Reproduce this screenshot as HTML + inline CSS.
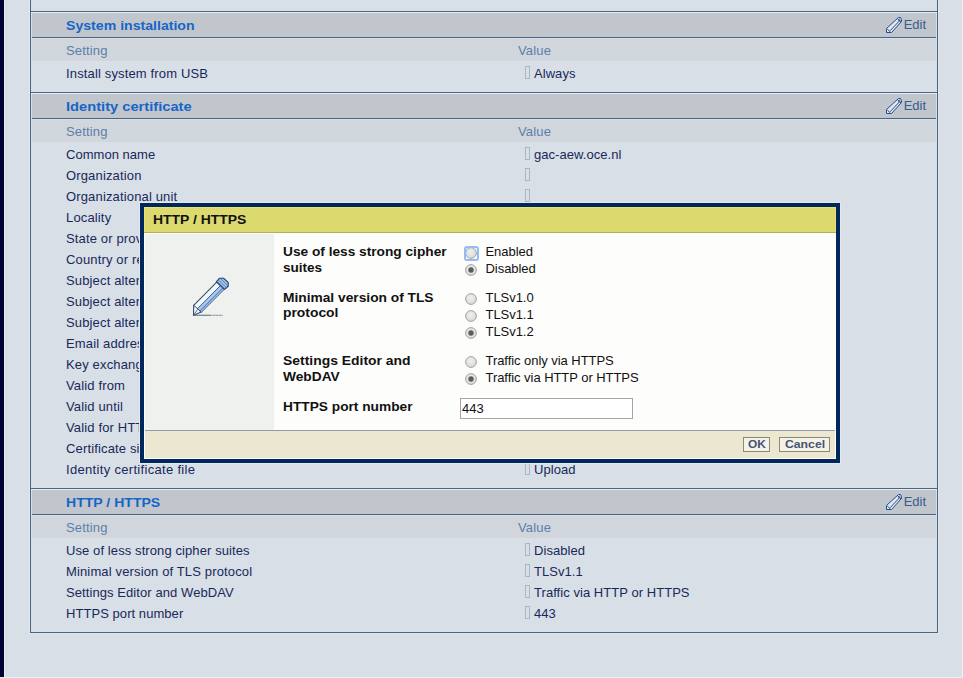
<!DOCTYPE html>
<html>
<head>
<meta charset="utf-8">
<style>
*{margin:0;padding:0;box-sizing:border-box}
html,body{width:963px;height:678px;overflow:hidden}
body{position:relative;background:#d9dfe6;font-family:"Liberation Sans",sans-serif;font-size:13px;color:#1b2a4c}
.a{position:absolute}
.t{position:absolute;white-space:nowrap;line-height:1}
.hl{position:absolute;left:30px;width:908px;height:1px;background:#4a6584}
.hlt{position:absolute;left:31px;width:906px;height:1px;background:#e9edf1}
.hdr{position:absolute;left:32px;width:904px;height:24px;background:#c1c5cc}
.hdrb{position:absolute;left:32px;width:904px;height:1px;background:#4a6584}
.set{position:absolute;left:32px;width:904px;height:22px;background:#d1d6dd}
.ttl{font-weight:bold;font-size:14px;color:#1f6bc4}
.sh{color:#6d8aaa}
.box{position:absolute;left:525px;width:5px;height:13px;border:1px solid #a9b6c6}
.edit{color:#3b5b8c}
</style>
</head>
<body>
<!-- left dark bar -->
<div class="a" style="left:0;top:0;width:4px;height:677px;background:#00032f"></div>
<div class="a" style="left:4px;top:0;width:1px;height:678px;background:#e6eaf1"></div>
<div class="a" style="left:0;top:677px;width:963px;height:1px;background:#eef0f3"></div>
<div class="a" style="left:962px;top:0;width:1px;height:678px;background:#eef0f3"></div>

<!-- panel borders -->
<div class="a" style="left:29px;top:0;width:1px;height:633px;background:#e4e8ee"></div>
<div class="a" style="left:30px;top:0;width:1px;height:633px;background:#4a6584"></div>
<div class="a" style="left:937px;top:0;width:1px;height:633px;background:#4a6584"></div>
<div class="a" style="left:938px;top:0;width:1px;height:634px;background:#e2e6ec"></div>
<div class="a" style="left:29px;top:633px;width:910px;height:1px;background:#e2e6ec"></div>
<div class="a" style="left:30px;top:632px;width:908px;height:1px;background:#4a6584"></div>

<!-- Section 1 -->
<div class="hl" style="top:11px"></div>
<div class="hlt" style="top:12px"></div>
<div class="hdr" style="top:13px"></div>
<div class="hdrb" style="top:37px"></div>
<div class="set" style="top:39px"></div>

<!-- Section 2 -->
<div class="hl" style="top:92px"></div>
<div class="hlt" style="top:93px"></div>
<div class="hdr" style="top:94px"></div>
<div class="hdrb" style="top:118px"></div>
<div class="set" style="top:120px"></div>

<!-- Section 3 -->
<div class="hl" style="top:488px"></div>
<div class="hlt" style="top:489px"></div>
<div class="hdr" style="top:490px"></div>
<div class="hdrb" style="top:514px"></div>
<div class="set" style="top:516px"></div>

<div class="t" style="left:66px;top:19.84px;font-size:12px;transform:scaleX(1.176);transform-origin:0 0;font-weight:bold;color:#1665c8">System installation</div>
<svg class="a" style="left:885px;top:16px" width="19" height="19" viewBox="0 0 19 19">
<path d="M1.5 16.5 L1.5 12.5 L13.5 1.5 L15.5 1.5 L16.5 3.5 L16.5 5.5 L6.5 16.5 Z" fill="#e3e6ec" stroke="#1f4e8e" stroke-width="1" stroke-linejoin="round"/>
<path d="M5 14.8 L14.8 4.5" stroke="#1f4e8e" stroke-width="1"/>
<path d="M2.3 13 L5.6 16.2" stroke="#1f4e8e" stroke-width="1"/>
<path d="M12.2 2.4 L16 6" stroke="#1f4e8e" stroke-width="1"/>
<circle cx="14.3" cy="3.9" r="0.9" fill="none" stroke="#1f4e8e" stroke-width="0.7"/>
</svg>
<div class="t" style="left:903.7px;top:18.00px;font-size:13px;color:#3b5b8c">Edit</div>
<div class="t" style="left:66px;top:44.00px;font-size:13px;color:#5b7fab;letter-spacing:0.15px">Setting</div>
<div class="t" style="left:518px;top:44.00px;font-size:13px;color:#5b7fab;letter-spacing:0.15px">Value</div>
<div class="t" style="left:66px;top:67.00px;font-size:13px;color:#17295a;letter-spacing:0.15px">Install system from USB</div>
<div class="box" style="top:66px"></div>
<div class="t" style="left:534px;top:67.00px;font-size:13px;color:#17295a;letter-spacing:0.05px">Always</div>
<div class="t" style="left:66px;top:100.84px;font-size:12px;transform:scaleX(1.223);transform-origin:0 0;font-weight:bold;color:#1665c8">Identity certificate</div>
<svg class="a" style="left:885px;top:97px" width="19" height="19" viewBox="0 0 19 19">
<path d="M1.5 16.5 L1.5 12.5 L13.5 1.5 L15.5 1.5 L16.5 3.5 L16.5 5.5 L6.5 16.5 Z" fill="#e3e6ec" stroke="#1f4e8e" stroke-width="1" stroke-linejoin="round"/>
<path d="M5 14.8 L14.8 4.5" stroke="#1f4e8e" stroke-width="1"/>
<path d="M2.3 13 L5.6 16.2" stroke="#1f4e8e" stroke-width="1"/>
<path d="M12.2 2.4 L16 6" stroke="#1f4e8e" stroke-width="1"/>
<circle cx="14.3" cy="3.9" r="0.9" fill="none" stroke="#1f4e8e" stroke-width="0.7"/>
</svg>
<div class="t" style="left:903.7px;top:99.00px;font-size:13px;color:#3b5b8c">Edit</div>
<div class="t" style="left:66px;top:125.00px;font-size:13px;color:#5b7fab;letter-spacing:0.15px">Setting</div>
<div class="t" style="left:518px;top:125.00px;font-size:13px;color:#5b7fab;letter-spacing:0.15px">Value</div>
<div class="t" style="left:66px;top:148.00px;font-size:13px;color:#17295a;letter-spacing:0.03px">Common name</div>
<div class="box" style="top:147px"></div>
<div class="t" style="left:534px;top:148.00px;font-size:13px;color:#17295a;letter-spacing:0.05px">gac-aew.oce.nl</div>
<div class="t" style="left:66px;top:169.00px;font-size:13px;color:#17295a;letter-spacing:0.15px">Organization</div>
<div class="box" style="top:168px"></div>
<div class="t" style="left:66px;top:190.00px;font-size:13px;color:#17295a;letter-spacing:0.15px">Organizational unit</div>
<div class="box" style="top:189px"></div>
<div class="t" style="left:66px;top:211.00px;font-size:13px;color:#17295a;letter-spacing:0.15px">Locality</div>
<div class="t" style="left:66px;top:232.00px;font-size:13px;color:#17295a;letter-spacing:0.15px">State or province</div>
<div class="t" style="left:66px;top:253.00px;font-size:13px;color:#17295a;letter-spacing:0.15px">Country or region</div>
<div class="t" style="left:66px;top:274.00px;font-size:13px;color:#17295a;letter-spacing:0.15px">Subject alternative name 1</div>
<div class="t" style="left:66px;top:295.00px;font-size:13px;color:#17295a;letter-spacing:0.15px">Subject alternative name 2</div>
<div class="t" style="left:66px;top:316.00px;font-size:13px;color:#17295a;letter-spacing:0.15px">Subject alternative name 3</div>
<div class="t" style="left:66px;top:337.00px;font-size:13px;color:#17295a;letter-spacing:0.15px">Email address</div>
<div class="t" style="left:66px;top:358.00px;font-size:13px;color:#17295a;letter-spacing:0.15px">Key exchange algorithm</div>
<div class="t" style="left:66px;top:379.00px;font-size:13px;color:#17295a;letter-spacing:0.15px">Valid from</div>
<div class="t" style="left:66px;top:400.00px;font-size:13px;color:#17295a;letter-spacing:0.15px">Valid until</div>
<div class="t" style="left:66px;top:421.00px;font-size:13px;color:#17295a;letter-spacing:0.15px">Valid for HTTPS</div>
<div class="t" style="left:66px;top:442.00px;font-size:13px;color:#17295a;letter-spacing:0.15px">Certificate signature</div>
<div class="t" style="left:66px;top:463.00px;font-size:13px;color:#17295a;letter-spacing:0.317px">Identity certificate file</div>
<div class="box" style="top:462px"></div>
<div class="t" style="left:534px;top:463.00px;font-size:13px;color:#17295a;letter-spacing:0.05px">Upload</div>
<div class="t" style="left:66px;top:496.84px;font-size:12px;transform:scaleX(1.171);transform-origin:0 0;font-weight:bold;color:#1665c8">HTTP / HTTPS</div>
<svg class="a" style="left:885px;top:493px" width="19" height="19" viewBox="0 0 19 19">
<path d="M1.5 16.5 L1.5 12.5 L13.5 1.5 L15.5 1.5 L16.5 3.5 L16.5 5.5 L6.5 16.5 Z" fill="#e3e6ec" stroke="#1f4e8e" stroke-width="1" stroke-linejoin="round"/>
<path d="M5 14.8 L14.8 4.5" stroke="#1f4e8e" stroke-width="1"/>
<path d="M2.3 13 L5.6 16.2" stroke="#1f4e8e" stroke-width="1"/>
<path d="M12.2 2.4 L16 6" stroke="#1f4e8e" stroke-width="1"/>
<circle cx="14.3" cy="3.9" r="0.9" fill="none" stroke="#1f4e8e" stroke-width="0.7"/>
</svg>
<div class="t" style="left:903.7px;top:495.00px;font-size:13px;color:#3b5b8c">Edit</div>
<div class="t" style="left:66px;top:521.00px;font-size:13px;color:#5b7fab;letter-spacing:0.15px">Setting</div>
<div class="t" style="left:518px;top:521.00px;font-size:13px;color:#5b7fab;letter-spacing:0.15px">Value</div>
<div class="t" style="left:66px;top:544.00px;font-size:13px;color:#17295a;letter-spacing:0.095px">Use of less strong cipher suites</div>
<div class="box" style="top:543px"></div>
<div class="t" style="left:534px;top:544.00px;font-size:13px;color:#17295a;letter-spacing:0.05px">Disabled</div>
<div class="t" style="left:66px;top:565.00px;font-size:13px;color:#17295a;letter-spacing:0.14px">Minimal version of TLS protocol</div>
<div class="box" style="top:564px"></div>
<div class="t" style="left:534px;top:565.00px;font-size:13px;color:#17295a;letter-spacing:0.05px">TLSv1.1</div>
<div class="t" style="left:66px;top:586.00px;font-size:13px;color:#17295a;letter-spacing:0.08px">Settings Editor and WebDAV</div>
<div class="box" style="top:585px"></div>
<div class="t" style="left:534px;top:586.00px;font-size:13px;color:#17295a;letter-spacing:0.05px">Traffic via HTTP or HTTPS</div>
<div class="t" style="left:66px;top:607.00px;font-size:13px;color:#17295a;letter-spacing:0.056px">HTTPS port number</div>
<div class="box" style="top:606px"></div>
<div class="t" style="left:534px;top:607.00px;font-size:13px;color:#17295a;letter-spacing:0.05px">443</div>
<div class="a" style="left:139px;top:202px;width:702px;height:262px;background:#e4e8ee"></div>
<div class="a" style="left:140px;top:203px;width:700px;height:260px;background:#00285c"></div>
<div class="a" style="left:144px;top:207px;width:692px;height:25px;background:#dcd96e;border:1px solid #e8e472;border-bottom:0"></div>
<div class="a" style="left:144px;top:232px;width:692px;height:1px;background:#b1ad62"></div>
<div class="a" style="left:144px;top:233px;width:692px;height:226px;background:#fdfdfb"></div>
<div class="a" style="left:145px;top:234px;width:129px;height:196px;background:#eff1ef"></div>
<div class="a" style="left:145px;top:430px;width:690px;height:1px;background:#8d9db0"></div>
<div class="a" style="left:145px;top:431px;width:690px;height:27px;background:#ece7d1"></div>
<div class="t" style="left:153px;top:213.84px;font-size:12px;transform:scaleX(1.160);transform-origin:0 0;font-weight:bold;color:#111">HTTP / HTTPS</div>
<div class="t" style="left:283px;top:245.84px;font-size:12px;transform:scaleX(1.141);transform-origin:0 0;font-weight:bold;color:#111">Use of less strong cipher</div>
<div class="t" style="left:283px;top:261.84px;font-size:12px;transform:scaleX(1.127);transform-origin:0 0;font-weight:bold;color:#111">suites</div>
<div class="t" style="left:283px;top:291.84px;font-size:12px;transform:scaleX(1.146);transform-origin:0 0;font-weight:bold;color:#111">Minimal version of TLS</div>
<div class="t" style="left:283px;top:306.84px;font-size:12px;transform:scaleX(1.154);transform-origin:0 0;font-weight:bold;color:#111">protocol</div>
<div class="t" style="left:283px;top:354.84px;font-size:12px;transform:scaleX(1.160);transform-origin:0 0;font-weight:bold;color:#111">Settings Editor and</div>
<div class="t" style="left:283px;top:370.84px;font-size:12px;transform:scaleX(1.144);transform-origin:0 0;font-weight:bold;color:#111">WebDAV</div>
<div class="t" style="left:283px;top:400.84px;font-size:12px;transform:scaleX(1.143);transform-origin:0 0;font-weight:bold;color:#111">HTTPS port number</div>
<svg class="a" style="left:465px;top:247px" width="12" height="12" viewBox="0 0 12 12">
<defs><radialGradient id="g253" cx="0.45" cy="0.4" r="0.65"><stop offset="0" stop-color="#f0f0f0"/><stop offset="1" stop-color="#d6d6d6"/></radialGradient></defs>
<circle cx="6" cy="6" r="5.4" fill="url(#g253)" stroke="#a4a4a4" stroke-width="1"/></svg>
<div class="a" style="left:464px;top:246px;width:15px;height:15px;border:2px solid #93bbf7;border-radius:3px"></div>
<div class="t" style="left:485.5px;top:244.50px;font-size:13px;color:#111;letter-spacing:-0.05px">Enabled</div>
<svg class="a" style="left:465px;top:264px" width="12" height="12" viewBox="0 0 12 12">
<defs><radialGradient id="g270" cx="0.45" cy="0.4" r="0.65"><stop offset="0" stop-color="#f0f0f0"/><stop offset="1" stop-color="#d6d6d6"/></radialGradient></defs>
<circle cx="6" cy="6" r="5.4" fill="url(#g270)" stroke="#a4a4a4" stroke-width="1"/><circle cx="6" cy="6" r="2.7" fill="#5c5c5c"/></svg>
<div class="t" style="left:485.5px;top:261.50px;font-size:13px;color:#111;letter-spacing:-0.05px">Disabled</div>
<svg class="a" style="left:465px;top:293px" width="12" height="12" viewBox="0 0 12 12">
<defs><radialGradient id="g299" cx="0.45" cy="0.4" r="0.65"><stop offset="0" stop-color="#f0f0f0"/><stop offset="1" stop-color="#d6d6d6"/></radialGradient></defs>
<circle cx="6" cy="6" r="5.4" fill="url(#g299)" stroke="#a4a4a4" stroke-width="1"/></svg>
<div class="t" style="left:485.5px;top:291.00px;font-size:13px;color:#111;letter-spacing:-0.05px">TLSv1.0</div>
<svg class="a" style="left:465px;top:310px" width="12" height="12" viewBox="0 0 12 12">
<defs><radialGradient id="g316" cx="0.45" cy="0.4" r="0.65"><stop offset="0" stop-color="#f0f0f0"/><stop offset="1" stop-color="#d6d6d6"/></radialGradient></defs>
<circle cx="6" cy="6" r="5.4" fill="url(#g316)" stroke="#a4a4a4" stroke-width="1"/></svg>
<div class="t" style="left:485.5px;top:308.00px;font-size:13px;color:#111;letter-spacing:-0.05px">TLSv1.1</div>
<svg class="a" style="left:465px;top:327px" width="12" height="12" viewBox="0 0 12 12">
<defs><radialGradient id="g333" cx="0.45" cy="0.4" r="0.65"><stop offset="0" stop-color="#f0f0f0"/><stop offset="1" stop-color="#d6d6d6"/></radialGradient></defs>
<circle cx="6" cy="6" r="5.4" fill="url(#g333)" stroke="#a4a4a4" stroke-width="1"/><circle cx="6" cy="6" r="2.7" fill="#5c5c5c"/></svg>
<div class="t" style="left:485.5px;top:325.00px;font-size:13px;color:#111;letter-spacing:-0.05px">TLSv1.2</div>
<svg class="a" style="left:465px;top:356px" width="12" height="12" viewBox="0 0 12 12">
<defs><radialGradient id="g362" cx="0.45" cy="0.4" r="0.65"><stop offset="0" stop-color="#f0f0f0"/><stop offset="1" stop-color="#d6d6d6"/></radialGradient></defs>
<circle cx="6" cy="6" r="5.4" fill="url(#g362)" stroke="#a4a4a4" stroke-width="1"/></svg>
<div class="t" style="left:485.5px;top:354.00px;font-size:13px;color:#111;letter-spacing:-0.05px">Traffic only via HTTPS</div>
<svg class="a" style="left:465px;top:373px" width="12" height="12" viewBox="0 0 12 12">
<defs><radialGradient id="g379" cx="0.45" cy="0.4" r="0.65"><stop offset="0" stop-color="#f0f0f0"/><stop offset="1" stop-color="#d6d6d6"/></radialGradient></defs>
<circle cx="6" cy="6" r="5.4" fill="url(#g379)" stroke="#a4a4a4" stroke-width="1"/><circle cx="6" cy="6" r="2.7" fill="#5c5c5c"/></svg>
<div class="t" style="left:485.5px;top:371.00px;font-size:13px;color:#111;letter-spacing:-0.05px">Traffic via HTTP or HTTPS</div>
<div class="a" style="left:460px;top:398px;width:173px;height:21px;background:#fff;border:1px solid #a5a5a5"></div>
<div class="t" style="left:462px;top:402.00px;font-size:13px;color:#111">443</div>
<svg class="a" style="left:188px;top:273px" width="46" height="46" viewBox="0 0 46 46">
<g stroke-linejoin="round" stroke-linecap="round">
<path d="M5.5 42.3 L5.7 32.3 L29.2 8.6 L36.4 15.8 L13.2 39 Z" fill="#f2f7fc" stroke="#33506f" stroke-width="1.1"/>
<path d="M9.6 35.8 L33.4 11.8 L36.4 15.8 L13.2 39 Z" fill="#a9c9ee"/>
<path d="M12 38 L35.2 14.6" stroke="#5d8bc4" stroke-width="1.2"/>
<path d="M9.6 35.6 L33.4 11.6" stroke="#2f4e74" stroke-width="0.9"/>
<path d="M5.7 32.3 L13.2 39" stroke="#33506f" stroke-width="1" fill="none"/>
<path d="M5.5 42.3 L9.5 36.6" stroke="#33506f" stroke-width="0.8" fill="none"/>
<path d="M28.3 8.8 L31.4 5.3 L35.8 5.3 L40.2 9.3 L40.2 13.2 L36.4 16.3 Z" fill="#9dbfe6" stroke="#1f3e66" stroke-width="1.1"/>
<path d="M31 7.5 L38.6 15 M33 6 L40 13 M30 9 L37 16" stroke="#5a86bd" stroke-width="0.9"/>
<path d="M5.5 42.3 L22 42.3" stroke="#4d6986" stroke-width="1.1"/>
<path d="M22 42.3 L34.5 42.3" stroke="#7f95ab" stroke-width="1" stroke-dasharray="2 1"/>
</g></svg>
<div class="a" style="left:743px;top:437px;width:27px;height:15px;background:#f3f2e8;border:1px solid #8c8b72"></div>
<div class="a" style="left:779px;top:437px;width:51px;height:15px;background:#f3f2e8;border:1px solid #8c8b72"></div>
<div class="t" style="left:748px;top:439.19px;font-size:11px;transform:scaleX(1.081);transform-origin:0 0;font-weight:bold;color:#485470">OK</div>
<div class="t" style="left:785px;top:439.19px;font-size:11px;transform:scaleX(1.111);transform-origin:0 0;font-weight:bold;color:#485470">Cancel</div>

</body>
</html>
